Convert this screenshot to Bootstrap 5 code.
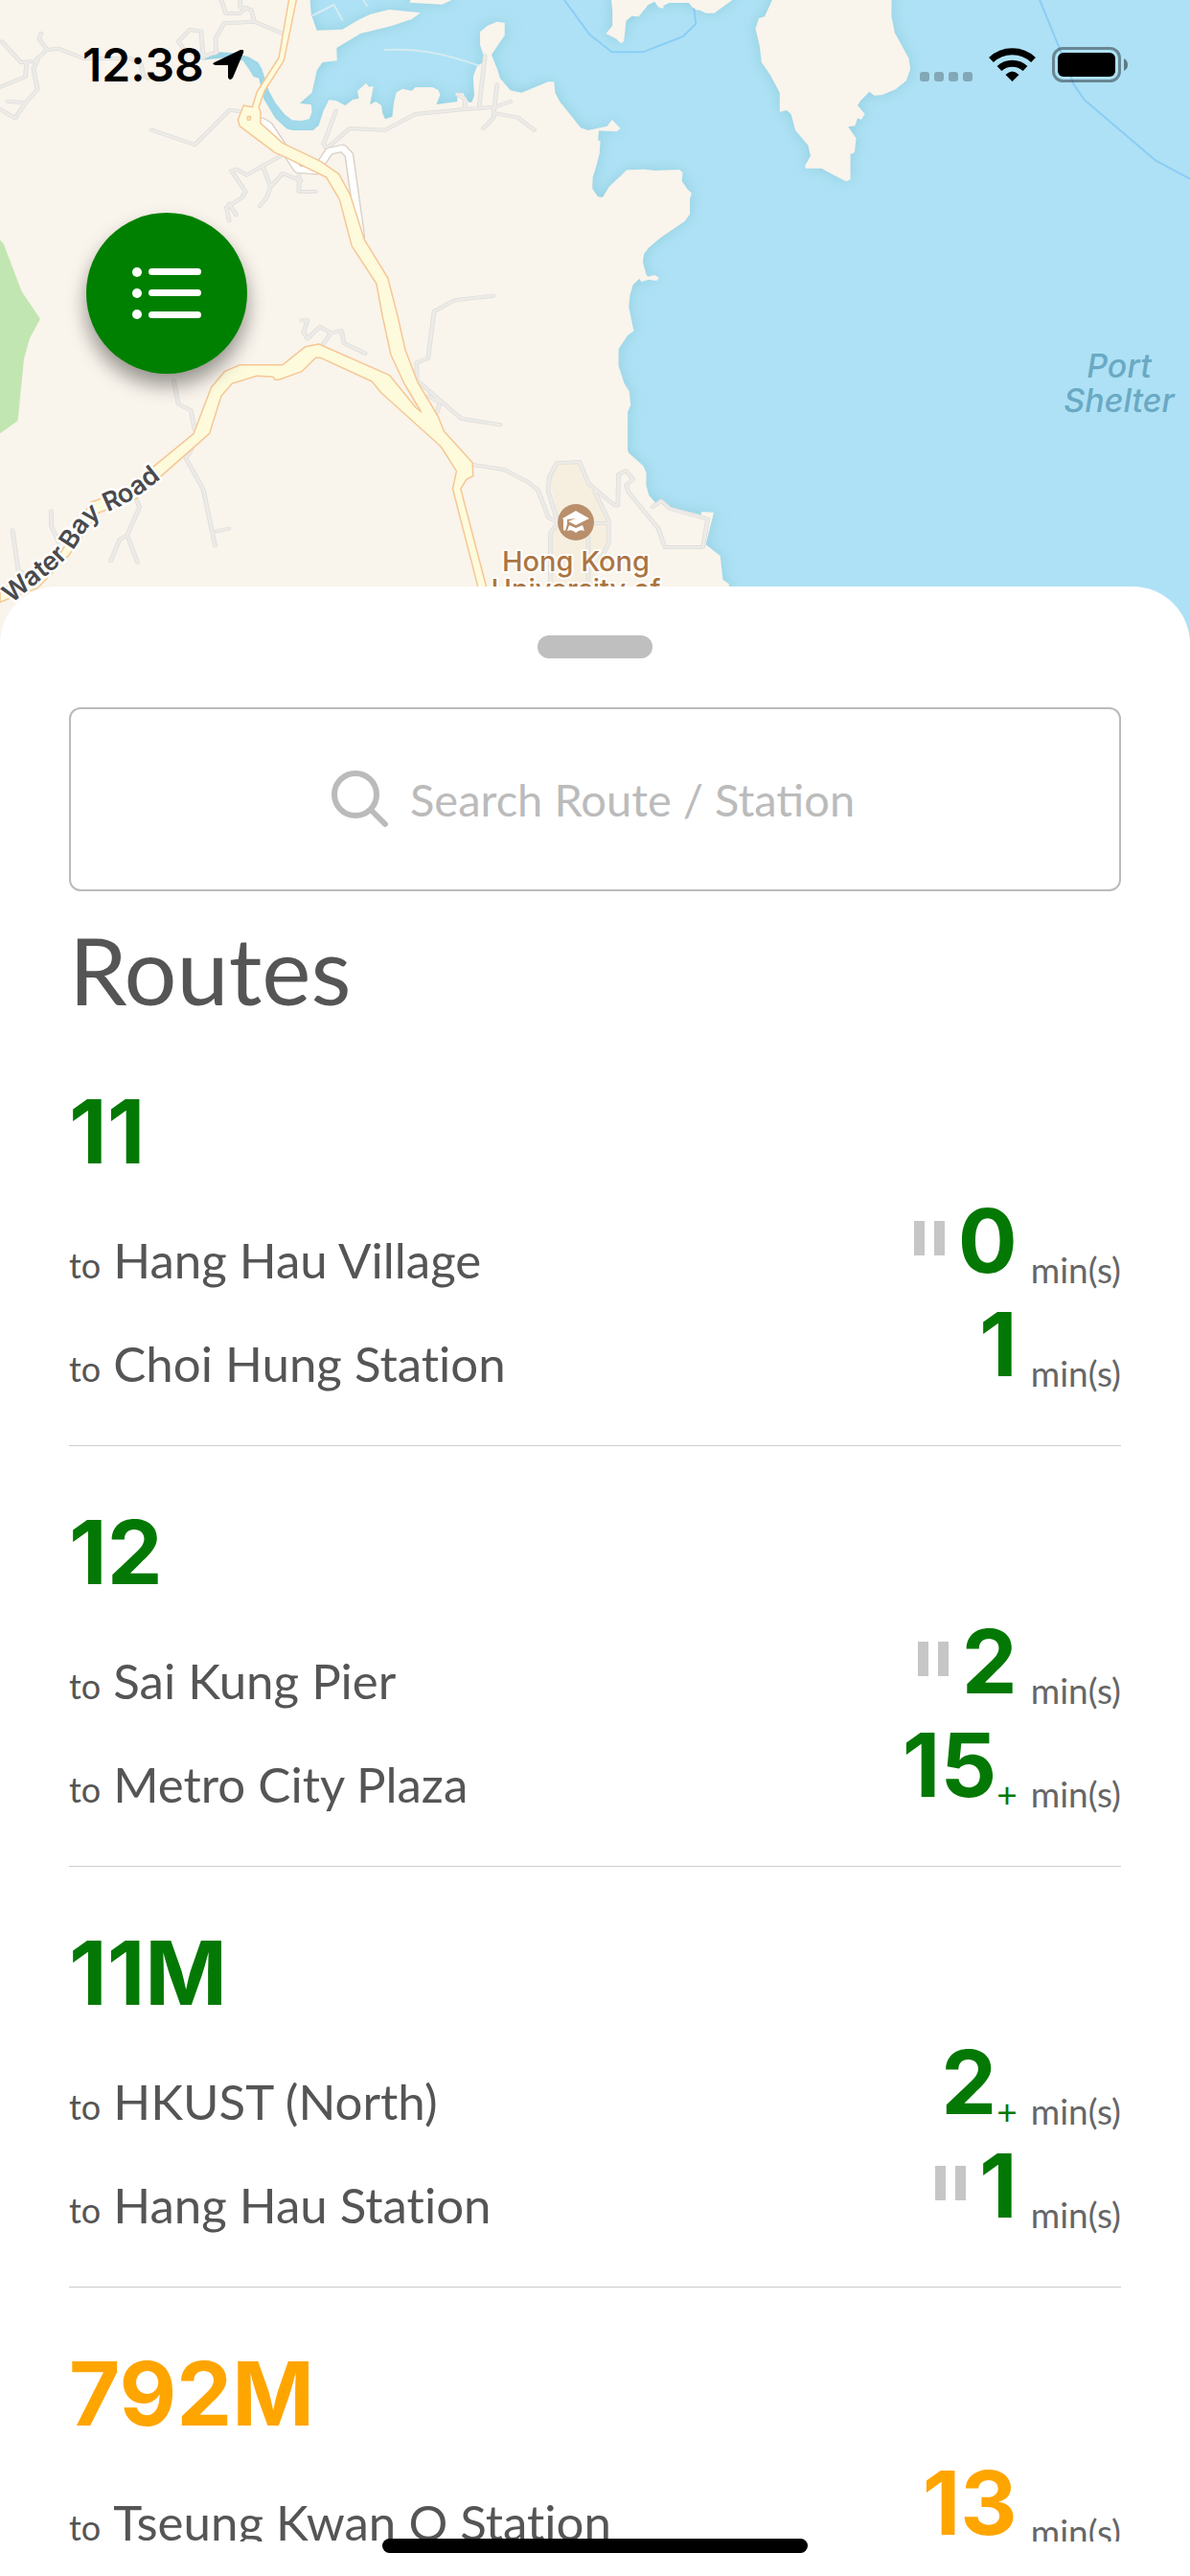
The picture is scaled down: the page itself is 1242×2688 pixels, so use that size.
<!DOCTYPE html>
<html lang="en">
<head>
<meta charset="utf-8">
<meta name="viewport" content="width=device-width, initial-scale=1">
<title>Routes</title>
<link href="https://cdn.jsdelivr.net/npm/bootstrap@5.3.0/dist/css/bootstrap.min.css" rel="stylesheet">
<style>
  body { font-family: Lato, sans-serif; font-variant-ligatures: none; color: #555; background: #fff; }
  .map-area { height: 672px; background: #aee1f5; }
  .map-canvas { inset: 0; width: 100%; height: 100%; font-family: Inter, sans-serif; }
  .geo * { vector-effect: non-scaling-stroke; }
  .status-bar { padding: 40px 65px 0 86px; color: #000; font-family: Inter, sans-serif; }
  .clock { font-size: 48px; font-weight: 600; line-height: 56px; }
  .arrow { margin-top: 12px; }
  .status-icons { margin-top: 9px; }
  .fab { width: 168px; height: 168px; margin: 126px 0 0 90px; background: #008000; box-shadow: 0 12px 20px rgba(0,0,0,.4); }
  .sheet { margin-top: -60px; padding: 51px 72px 0; border-radius: 60px 60px 0 0; min-height: 0; }
  .grabber { width: 120px; height: 24px; background: #bfbfbf; }
  .search-box { height: 192px; margin-top: 51px; border: 2px solid #bbb; border-radius: 12px; gap: 22px; }
  .search-box input { width: 468px; font-size: 47px; line-height: 58px; color: #555; outline: 0; }
  .search-box input::placeholder { color: #bbb; opacity: 1; }
  .sheet-title { margin: 24px 0 0; font-size: 97px; line-height: 116px; font-weight: 400; color: #555; }
  .route-list { min-height: 0; overflow-y: auto; scrollbar-width: none; margin-bottom: 36px; }
  .route-list::-webkit-scrollbar { display: none; }
  .route { padding: 54px 0; border-bottom: 1px solid #ccc; --line: #047804; }
  .route-amber { --line: #ffa500; }
  .route-no { margin: 0; font: 700 92px/114px Inter, sans-serif; color: var(--line); }
  .stop { height: 108px; }
  .to-word { font-size: 36px; line-height: 52px; margin-right: 13px; }
  .stop-name { font-size: 51px; line-height: 62px; }
  .minutes { font: 700 92px/102px Inter, sans-serif; color: var(--line); }
  .more { font-size: 37px; line-height: 43px; color: var(--line); }
  .unit { font-size: 37px; line-height: 43px; margin-left: 14px; color: #666; }
  .paused { width: 32px; height: 36px; margin: 0 14px 36px 0; border: solid #c6c6c6; border-width: 0 11px; }
  .home-bar { left: 0; right: 0; bottom: 24px; width: 444px; height: 15px; background: #000; z-index: 5; }
</style>
<script src="https://cdn.jsdelivr.net/npm/bootstrap@5.3.0/dist/js/bootstrap.bundle.min.js"></script>
</head>
<body>
<div class="vh-100 d-flex flex-column overflow-hidden position-relative">

  <header class="map-area position-relative flex-shrink-0">
    <svg class="map-canvas position-absolute" viewBox="0 0 1242 672" preserveAspectRatio="xMidYMin slice" role="img" aria-label="Map">
      <defs>
        <filter id="shore" x="-5%" y="-5%" width="110%" height="110%">
          <feDropShadow dx="0" dy="0" stdDeviation="20" flood-color="#8accd8" flood-opacity=".8"/>
        </filter>
        <path id="minor" d="M583 0L595 42H632L645 28L662 30L670 68L590 73L568 120L570 165L535 175L530 98L500 93L470 130L485 155L530 180M633 0V22L650 25M670 68L745 105M108 105L103 122L124 156L153 152L220 183H345L372 202L378 238L392 245M5 130L55 195L90 192L124 156M0 272L67 240L70 196M100 185L88 215L99 280L65 325L40 370L0 342M20 317L65 322M400 407L513 453L605 344L630 348M740 488L650 548L625 530L610 535L647 600L638 618L597 650L604 690M604 638L622 672M692 518L713 585L703 618L685 645M713 585L745 543L793 565M788 545V600H832M885 348L853 450L860 465L922 402L1015 407L1095 357L1225 342L1305 335L1345 318M1205 295L1225 310V342M1278 175L1263 330M1310 265L1303 335L1300 370L1273 402M1303 355L1365 368L1408 407M1300 926L1197 940L1144 975L1128 1122L1098 1135V1190L1215 1310L1318 1330M1130 1240L1160 1260L1152 1290M795 1003H810L800 1040L810 1060L843 1023L872 1042L900 1036L907 1075L962 1106M872 1042L850 1080M458 1192L470 1265L503 1285L513 1345M505 1405L490 1435L535 1530L567 1708M570 1663L603 1655M360 1565L368 1588L335 1675L362 1760M335 1675L315 1690L292 1755M135 1600V1645L155 1700M33 1660L48 1785L90 1815M1247 1455L1328 1470L1393 1510L1418 1535L1445 1620L1470 1635M1450 1850V1670L1470 1635L1445 1540L1447 1495L1467 1450L1527 1446L1552 1515L1620 1582H1628L1630 1485L1650 1474L1668 1500L1650 1520L1656 1540L1735 1655L1752 1713H1852L1865 1625L1765 1592L1742 1568L1720 1587M1568 1540L1604 1630V1700L1580 1760M1550 1638H1604M1550 1680V1850"/>
        <path id="ramps" d="M690 380L707 392L785 530L835 535M850 505L868 473L903 464L920 485L950 740"/>
        <path id="road-line" d="M12 630L40 607Q72 584 84 562Q94 544 112 534Q140 524 178 491"/>
      </defs>
      <g class="geo" transform="scale(.39605 .33333)" fill="none" stroke-linejoin="round" stroke-linecap="round">
        <g fill="#f9f4ec" filter="url(#shore)">
          <path d="M-60 -60H817V0L820 45L835 95L902 92L945 62L975 45L1025 30L1108 40L1085 60L1030 82L950 105L887 150L888 190L850 195L835 220L822 290L790 323L820 328L822 350L815 372L795 378L770 376L750 358L725 320L708 282L690 215L680 195L655 178L620 166L580 163L530 188L600 180L640 190L655 215L668 240L682 245L695 310L725 370L755 403L770 408H825L840 392L853 345L867 313L885 315L910 330L930 312L946 308L942 285L965 260L972 272L984 270L975 328L990 318L1005 330L1008 355L1015 373L1034 365L1038 320L1044 290L1060 278L1085 284L1095 273H1140L1155 282L1160 296L1150 327L1205 318V290L1220 292L1235 320H1243L1250 300L1247 240L1258 205L1275 195V175L1265 140V100L1285 80L1310 68L1330 72V110L1295 172L1310 215L1318 245L1345 283L1375 290L1445 256H1460L1463 290L1475 318L1510 370L1530 400L1550 408L1600 395L1613 375L1635 402L1625 412L1578 409L1576 440H1582L1580 480L1570 525L1562 555L1561 590L1575 615L1588 618L1605 585L1652 532L1700 530L1725 534L1790 531L1799 540L1797 567L1811 592L1823 605L1818 620V670L1805 692L1740 745L1710 775L1697 795L1694 820L1703 860L1708 866L1725 861L1737 870L1730 879L1710 875L1690 882L1685 872L1668 892L1660 925L1657 960L1670 1036L1654 1050L1630 1093V1145L1645 1200L1658 1225L1662 1268L1654 1290V1410L1657 1418L1695 1458L1703 1480V1520L1710 1550L1728 1575L1742 1565L1765 1588L1848 1612V1602L1881 1604L1860 1705L1898 1740L1905 1815L1921 1828V2100H-60Z"/>
          <path d="M1611 0L1614 35V80L1597 105L1625 122L1635 135L1644 130L1650 65L1665 50L1683 52L1708 15L1725 5L1735 22L1748 27V18L1763 9H1815L1830 30L1845 32L1860 41H1882L1930 0V-60H1611ZM1080 8L1165 14L1190 0V-40H1090Z"/>
          <path d="M2035 0L2015 52L2000 57L1991 90L2002 145L2007 195L2030 235L2055 290V350L2073 345L2085 358L2096 408L2130 455L2136 488L2121 520L2124 527H2165L2200 550L2230 568L2241 562V483L2252 477L2256 433L2235 397L2253 394L2260 370L2270 374L2279 357L2260 330L2268 315L2291 287L2304 299L2325 297L2360 280L2388 253L2399 215L2395 183L2358 103L2349 50L2350 -60H2035Z"/>
        </g>
        <path d="M1015 156Q1110 150 1200 182L1262 205M825 48L880 15L902 62M955 -5L967 18" stroke="#d4ebf0" stroke-width="2"/>
        <path d="M1487 0L1553 107L1612 163H1694L1800 114L1834 74L1829 28M2740 0L2790 145L2830 265L2858 313L3046 503L3136 560" stroke="#8bcdf5" stroke-width="2"/>
        <path d="M0 750L10 765L57 912L106 998L78 1060L63 1125L47 1317L0 1357Z" fill="#c2e6b2"/>
        <path d="M1450 1495L1467 1450L1527 1446L1570 1540L1604 1610V1700L1580 1760L1560 1850H1450V1670L1470 1635Z" fill="#f6efdf"/>
        <g><use href="#minor" stroke="#dfddd9" stroke-width="12"/><use href="#minor" stroke="#ecebe8" stroke-width="8"/></g>
        <use href="#ramps" stroke="#d9d0c5" stroke-width="25"/>
        <use href="#ramps" stroke="#fff" stroke-width="18"/>
        <path fill="#fdfbdc" stroke="#f6c795" stroke-width="1.5" d="M762 -5L735 180L677 288L665 335L642 330L627 375L632 395L725 478L745 488L860 555L895 625L927 770L992 888L1008 990L1030 1110L1065 1200L1110 1290L1095 1275L1027 1175L840 1077L805 1085L745 1142H633L592 1163L557 1212L510 1358L400 1465L350 1525L240 1572L160 1730L0 1850V1885L100 1840L180 1740L260 1605L360 1560L420 1495L552 1357L583 1240L612 1200L677 1177L720 1180L725 1189H735L795 1163L832 1120H845L980 1194L1005 1230L1162 1398L1203 1475L1193 1530L1258 1830L1330 2100H1350L1280 1830L1214 1530L1230 1500L1247 1490L1245 1448L1170 1350L1155 1305L1100 1195L1068 1095L1048 990L1022 870L960 750L923 610L893 545L845 505L745 448L686 385L687 352L682 335L697 285L748 190L782 -5Z"/>
        <path d="M653 364H661L659 376H653Z" fill="#f9e9c4" stroke="#f3bd88" stroke-width="1"/>
      </g>
      <text font-size="27" font-weight="600" fill="#4a4a4c" stroke="#fff" stroke-width="5" paint-order="stroke" stroke-linejoin="round"><textPath href="#road-line">Water Bay Road</textPath></text>
      <g font-size="29" font-weight="500" fill="#ab7542" stroke="#fff" stroke-width="4" paint-order="stroke" stroke-linejoin="round" text-anchor="middle">
        <text x="601" y="596">Hong Kong</text>
        <text x="601" y="625">University of</text>
      </g>
      <g transform="translate(601 545)">
        <circle r="19" fill="#b98f6c"/>
        <path d="M-14-4L0-12L14-4L0 3L-8-1L0-4L-9-3V2L-11 9L-13 8V-3Z" fill="#fff"/>
        <path d="M-7 3L0 6L7 3L9 9Q4 7 0 11Q-4 7-9 9Z" fill="#fff"/>
      </g>
      <g font-size="34" font-weight="500" font-style="italic" fill="#6aa9c4" text-anchor="middle">
        <text x="1168" y="394">Port</text>
        <text x="1168" y="430">Shelter</text>
      </g>
    </svg>

    <div class="status-bar position-relative d-flex align-items-start justify-content-between">
      <div class="d-flex align-items-start gap-2">
        <span class="clock">12:38</span>
        <svg class="arrow" width="34" height="32" viewBox="0 0 34 32" aria-hidden="true"><path d="M3 13L30 0Q34-1 33 3L22 29Q19 33 17 29V16H4Q-1 15 3 13Z"/></svg>
      </div>
      <svg class="status-icons" width="217" height="38" viewBox="960 49 217 38" aria-hidden="true">
        <g fill="#000" fill-opacity=".25"><rect x="960" y="75" width="10" height="10" rx="3"/><rect x="975" y="75" width="10" height="10" rx="3"/><rect x="990" y="75" width="10" height="10" rx="3"/><rect x="1005" y="75" width="10" height="10" rx="3"/></g>
        <g fill="none" stroke="#000" stroke-width="7"><path d="M1034.500 62.500A32 32 0 0 1 1078.500 62.500"/><path d="M1043 71.500A20 20 0 0 1 1070 71.500"/></g>
        <path d="M1049.500 78Q1056.500 71 1063.500 78L1056.500 85Z"/>
        <rect x="1099.500" y="50.500" width="69" height="34" rx="10" fill="none" stroke="#000" stroke-opacity=".4" stroke-width="3"/>
        <rect x="1104" y="55" width="60" height="25" rx="6"/>
        <path d="M1173 61Q1177 63 1177 67.500Q1177 72 1173 74Z" fill-opacity=".45"/>
      </svg>
    </div>

    <button type="button" class="fab btn border-0 rounded-circle p-0 position-relative d-flex align-items-center justify-content-center" aria-label="Menu">
      <svg width="74" height="54" viewBox="0 0 74 54" fill="#fff" aria-hidden="true">
        <circle cx="6" cy="5" r="5"/><circle cx="6" cy="27" r="5"/><circle cx="6" cy="49" r="5"/>
        <rect x="18" y="1" width="55" height="7" rx="3.500"/><rect x="18" y="23" width="55" height="7" rx="3.500"/><rect x="18" y="46" width="55" height="7" rx="3.500"/>
      </svg>
    </button>
  </header>

  <main class="sheet bg-white position-relative d-flex flex-column flex-grow-1">
    <div class="grabber rounded-pill mx-auto flex-shrink-0"></div>
    <label class="search-box d-flex align-items-center justify-content-center flex-shrink-0">
      <svg width="60" height="60" viewBox="0 0 60 60" fill="none" stroke="#bbb" stroke-width="6" stroke-linecap="round" aria-label="Search"><circle cx="25" cy="25" r="22"/><path d="M41 41L56 56"/></svg>
      <input type="text" class="border-0 p-0 bg-transparent" placeholder="Search Route / Station" aria-label="Search Route / Station">
    </label>
    <h1 class="sheet-title flex-shrink-0">Routes</h1>

    <ul class="route-list list-unstyled flex-grow-1">
      <li class="route">
        <h2 class="route-no">11</h2>
        <div class="stop d-flex align-items-end"><span class="to-word">to</span><span class="stop-name me-auto">Hang Hau Village</span><span class="paused"></span><span class="minutes">0</span><span class="unit">min(s)</span></div>
        <div class="stop d-flex align-items-end"><span class="to-word">to</span><span class="stop-name me-auto">Choi Hung Station</span><span class="minutes">1</span><span class="unit">min(s)</span></div>
      </li>
      <li class="route">
        <h2 class="route-no">12</h2>
        <div class="stop d-flex align-items-end"><span class="to-word">to</span><span class="stop-name me-auto">Sai Kung Pier</span><span class="paused"></span><span class="minutes">2</span><span class="unit">min(s)</span></div>
        <div class="stop d-flex align-items-end"><span class="to-word">to</span><span class="stop-name me-auto">Metro City Plaza</span><span class="minutes">15</span><span class="more">+</span><span class="unit">min(s)</span></div>
      </li>
      <li class="route">
        <h2 class="route-no">11M</h2>
        <div class="stop d-flex align-items-end"><span class="to-word">to</span><span class="stop-name me-auto">HKUST (North)</span><span class="minutes">2</span><span class="more">+</span><span class="unit">min(s)</span></div>
        <div class="stop d-flex align-items-end"><span class="to-word">to</span><span class="stop-name me-auto">Hang Hau Station</span><span class="paused"></span><span class="minutes">1</span><span class="unit">min(s)</span></div>
      </li>
      <li class="route route-amber">
        <h2 class="route-no">792M</h2>
        <div class="stop d-flex align-items-end"><span class="to-word">to</span><span class="stop-name me-auto">Tseung Kwan O Station</span><span class="minutes">13</span><span class="unit">min(s)</span></div>
      </li>
    </ul>
  </main>

  <div class="home-bar position-absolute mx-auto rounded-pill"></div>
</div>
</body>
</html>
